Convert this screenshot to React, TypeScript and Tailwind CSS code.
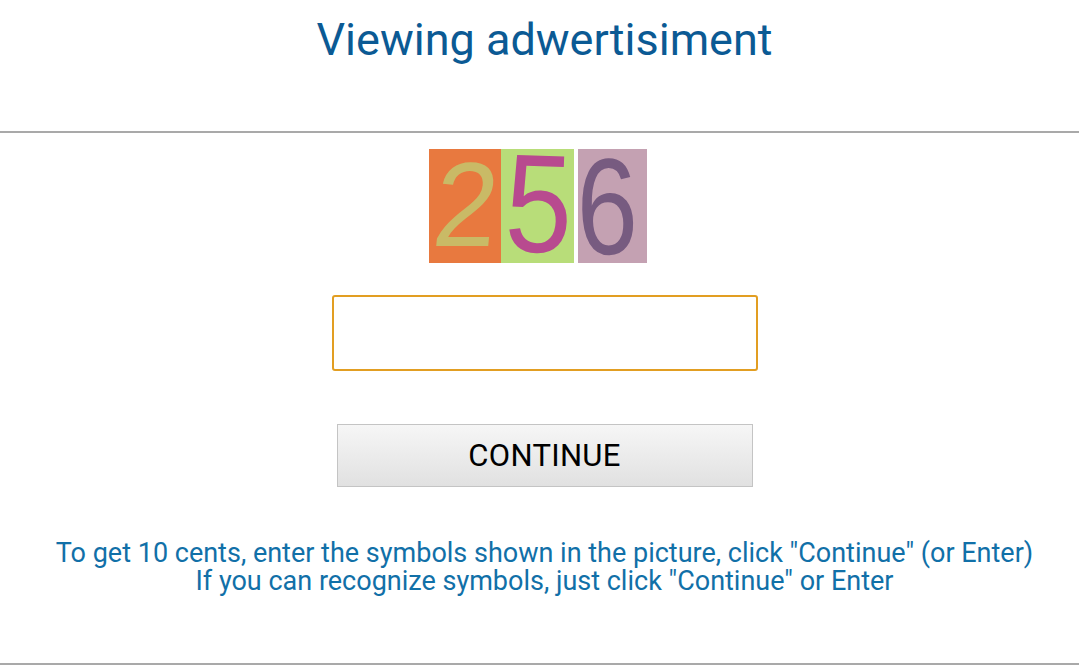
const tiles = [
    { digit: '2', bg: 'bg-[#e8793f]', fg: 'text-[#c9ba66]', cls: 'text-[120px] -skew-x-6 scale-x-[0.95] translate-x-[1px] -translate-y-[2px]', w: 'w-[72px]' },
    { digit: '5', bg: 'bg-[#b8dd79]', fg: 'text-[#b84a8f]', cls: 'text-[140px] rotate-2 scale-x-[0.86] translate-x-[1px] -translate-y-[2px]', w: 'w-[73px]' },
    { digit: '6', bg: 'bg-[#c4a1b2]', fg: 'text-[#775b80]', cls: 'text-[137px] -rotate-1 scale-x-[0.8] -translate-x-[5px]', w: 'w-[69px] ml-[4px]' },
]

const App = () => {
    return (
        <div className="w-[1079px] h-[665px] bg-white flex flex-col pl-[10px] font-['Roboto',sans-serif] overflow-hidden">

            <div className="h-[133px] shrink-0 flex justify-center border-b-2 border-[#a9a9a9] -ml-[10px] pl-[10px]">
                <h1 className="text-[45px] leading-none mt-[17px] text-[#0b5a94]">Viewing adwertisiment</h1>
            </div>

            <div className="flex-1 flex flex-col items-center border-b-2 border-[#a9a9a9] -ml-[10px] pl-[10px]">

                <div className="flex mt-[16px] h-[114px] -ml-[13px]">
                    {tiles.map(t => (
                        <div key={t.digit} className={`${t.w} h-full ${t.bg} flex items-center justify-center overflow-hidden`}>
                            <span className={`${t.fg} ${t.cls} leading-none font-['Liberation_Sans',sans-serif]`}>{t.digit}</span>
                        </div>
                    ))}
                </div>

                <input
                    type="text"
                    className="mt-[32px] w-[426px] h-[76px] shrink-0 border-2 border-[#e29e22] rounded-[3px] outline-none px-3 text-2xl"
                />

                <button className="mt-[53px] w-[416px] h-[63px] shrink-0 border border-[#c4c4c4] bg-gradient-to-b from-[#f6f6f6] to-[#e1e1e1] text-[31px] leading-none text-black tracking-[0.3px]">
                    CONTINUE
                </button>

                <div className="mt-[52px] text-center text-[#1170a8] text-[27px] leading-[28px]">
                    <p className="whitespace-nowrap">To get 10 cents, enter the symbols shown in the picture, click "Continue" (or Enter)</p>
                    <p className="whitespace-nowrap">If you can recognize symbols, just click "Continue" or Enter</p>
                </div>
            </div>
        </div>
    )
}

export default App
